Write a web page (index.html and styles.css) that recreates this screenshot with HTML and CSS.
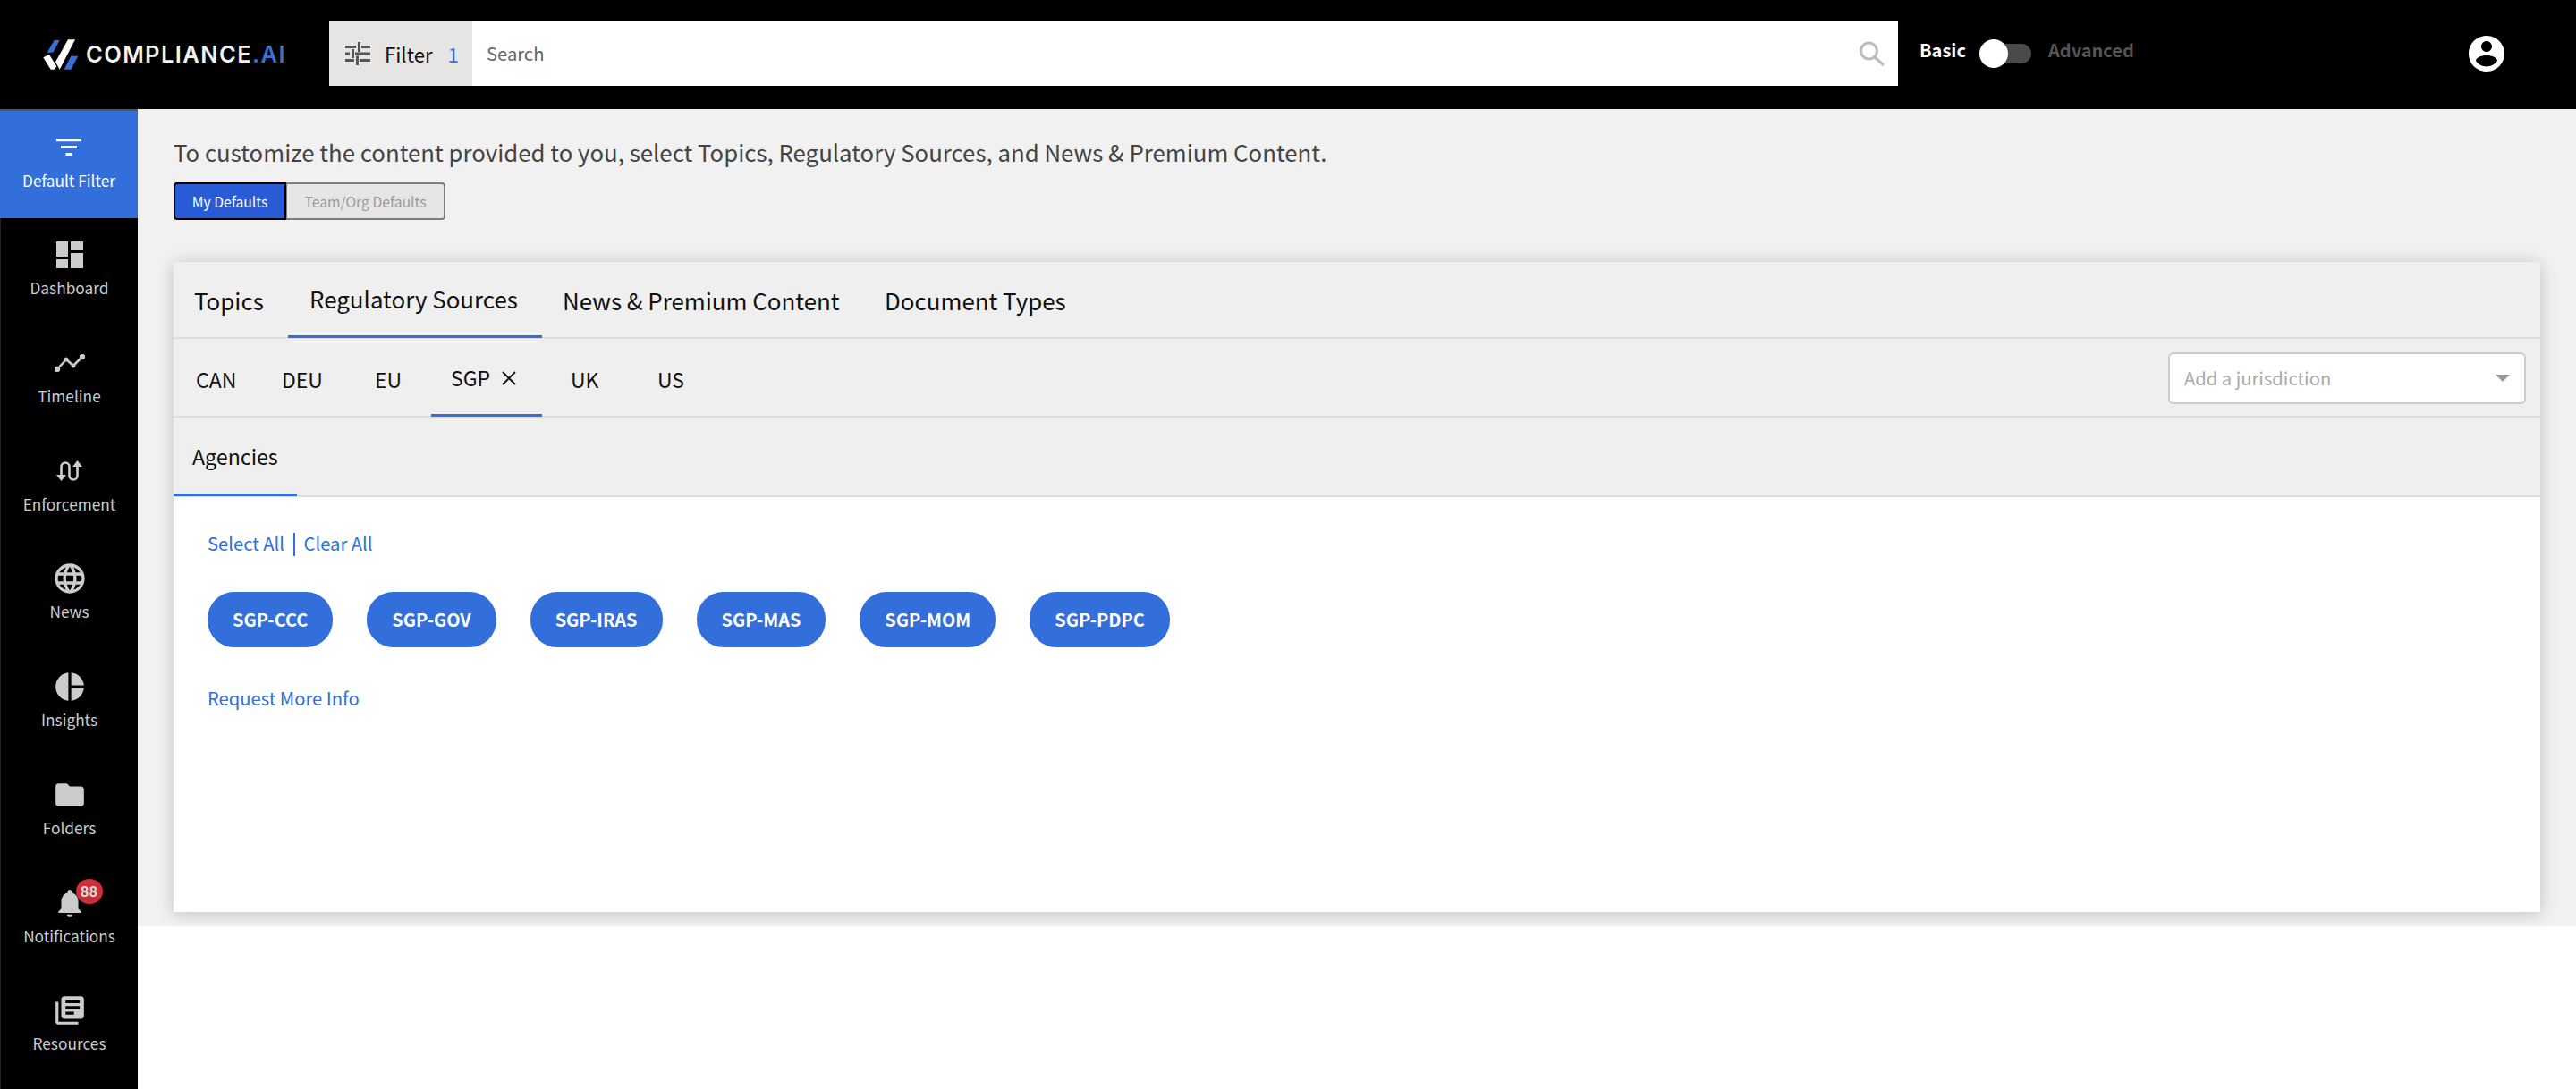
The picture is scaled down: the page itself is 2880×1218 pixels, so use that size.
FILE: index.html
```html
<!DOCTYPE html>
<html lang="en">
<head>
<meta charset="utf-8">
<title>Compliance.ai</title>
<link rel="stylesheet" href="styles.css">
</head>
<body>
<header class="topbar">
  <div class="logo">
    <svg class="logo-mark" viewBox="0 0 40 34" width="40" height="34">
      <polygon points="12.700,1 18.700,1 11.300,14.700 4.700,14.700" fill="#3a6fd8"/>
      <polygon points="0.300,20.300 7,17 15.300,30.300 12.700,33.700 8.700,33.700" fill="#fff"/>
      <polygon points="28,0.300 36,0.300 18.700,33.700 14,25.300" fill="#fff"/>
      <polygon points="31.300,18.700 39.300,18.700 31.300,33.700 23.700,33.700" fill="#3a6fd8"/>
    </svg>
    <span class="logo-text">COMPLIANCE<span class="logo-ai">.AI</span></span>
  </div>
  <div class="searchbar">
    <div class="filter-btn">
      <svg class="tune" viewBox="0 0 28 26" width="28" height="26" fill="#555">
        <rect x="0" y="4" width="12" height="3"/><rect x="18" y="4" width="10" height="3"/><rect x="14" y="0" width="3" height="11"/>
        <rect x="0" y="11.500" width="5" height="3"/><rect x="11" y="11.500" width="17" height="3"/><rect x="7" y="8" width="3" height="10"/>
        <rect x="0" y="19" width="10" height="3"/><rect x="16" y="19" width="12" height="3"/><rect x="12" y="15.500" width="3" height="10.500"/>
      </svg>
      <span class="filter-label">Filter</span>
      <span class="filter-count">1</span>
    </div>
    <div class="search-input">
      <span class="placeholder">Search</span>
      <svg viewBox="0 0 30 28" width="30" height="28" fill="none" stroke="#bdbdbd" stroke-width="3.200">
        <circle cx="11.500" cy="11" r="9"/><path d="M18 18 L28 27"/>
      </svg>
    </div>
  </div>
  <div class="mode">
    <span class="mode-basic">Basic</span>
    <span class="switch"><span class="thumb"></span></span>
    <span class="mode-adv">Advanced</span>
  </div>
  <svg class="avatar" viewBox="0 0 24 24" width="48" height="48" fill="#fff">
    <path d="M12 2C6.480 2 2 6.480 2 12s4.480 10 10 10 10-4.480 10-10S17.520 2 12 2zm0 3c1.660 0 3 1.340 3 3s-1.340 3-3 3-3-1.340-3-3 1.340-3 3-3zm0 14.200c-2.500 0-4.710-1.280-6-3.220.030-1.990 4-3.080 6-3.080 1.990 0 5.970 1.090 6 3.080-1.290 1.940-3.500 3.220-6 3.220z"/>
  </svg>
</header>

<div class="shell">
  <nav class="sidebar">
    <div class="nav-item active">
      <span class="nav-icon"><svg viewBox="0 0 28 20" width="28" height="20" fill="#fff"><rect y="0" width="28" height="3.200"/><rect x="5" y="8" width="18" height="3"/><rect x="10.500" y="16" width="7" height="3.200"/></svg></span>
      <span class="nav-label">Default Filter</span>
    </div>
    <div class="nav-item">
      <span class="nav-icon"><svg viewBox="0 0 30 30" width="30" height="30" fill="#ccc"><rect width="13" height="17"/><rect x="16" width="14" height="10"/><rect y="20" width="13" height="10"/><rect x="16" y="13" width="14" height="17"/></svg></span>
      <span class="nav-label">Dashboard</span>
    </div>
    <div class="nav-item">
      <span class="nav-icon"><svg viewBox="0 0 34 20" width="34" height="20" fill="#ccc" stroke="#ccc"><path d="M3 17 L13 6 L21 13 L31 3" fill="none" stroke-width="2.600"/><circle cx="3" cy="17" r="2.800"/><circle cx="13" cy="6" r="2"/><circle cx="21" cy="13" r="2"/><circle cx="31" cy="3" r="2.800"/></svg></span>
      <span class="nav-label">Timeline</span>
    </div>
    <div class="nav-item">
      <span class="nav-icon"><svg viewBox="0 0 30 24" width="30" height="24" fill="none" stroke="#ccc" stroke-width="2.600"><path d="M5.500 18 V7 A4.500 4.500 0 0 1 14.500 7 V17 A4.500 4.500 0 0 0 23.500 17 V4"/><path d="M0 16 H11 L5.500 23 Z" fill="#ccc" stroke="none"/><path d="M18 7 H29 L23.500 0 Z" fill="#ccc" stroke="none"/></svg></span>
      <span class="nav-label">Enforcement</span>
    </div>
    <div class="nav-item">
      <span class="nav-icon"><svg viewBox="0 0 24 24" width="40" height="40" fill="#ccc"><path d="M11.990 2C6.470 2 2 6.480 2 12s4.470 10 9.990 10C17.520 22 22 17.520 22 12S17.520 2 11.990 2zm6.930 6h-2.950c-.32-1.250-.78-2.450-1.380-3.560 1.840.63 3.370 1.910 4.330 3.560zM12 4.040c.83 1.200 1.480 2.530 1.910 3.960h-3.820c.43-1.430 1.080-2.760 1.910-3.960zM4.260 14C4.100 13.360 4 12.690 4 12s.1-1.360.26-2h3.380c-.08.660-.14 1.320-.14 2s.06 1.340.14 2H4.260zm.82 2h2.950c.32 1.250.78 2.450 1.380 3.560-1.840-.63-3.370-1.900-4.330-3.560zm2.950-8H5.080c.96-1.660 2.490-2.930 4.330-3.560C8.810 5.550 8.350 6.750 8.030 8zM12 19.960c-.83-1.200-1.480-2.530-1.910-3.960h3.820c-.43 1.430-1.080 2.760-1.910 3.960zM14.340 14H9.660c-.09-.66-.16-1.320-.16-2s.07-1.350.16-2h4.680c.09.650.16 1.320.16 2s-.07 1.340-.16 2zm.25 5.560c.6-1.110 1.060-2.310 1.380-3.560h2.950c-.96 1.650-2.490 2.930-4.330 3.560zM16.360 14c.08-.66.14-1.320.14-2s-.06-1.340-.14-2h3.380c.16.640.26 1.310.26 2s-.1 1.360-.26 2h-3.380z"/></svg></span>
      <span class="nav-label">News</span>
    </div>
    <div class="nav-item">
      <span class="nav-icon"><svg viewBox="0 0 24 24" width="38" height="38" fill="#ccc"><path d="M11 2v20c-5.070-.5-9-4.790-9-10s3.930-9.500 9-10zm2.030 0v8.990H22c-.47-4.740-4.240-8.520-8.970-8.990zm0 11.010V22c4.740-.47 8.500-4.250 8.970-8.990h-8.970z"/></svg></span>
      <span class="nav-label">Insights</span>
    </div>
    <div class="nav-item">
      <span class="nav-icon"><svg viewBox="0 0 24 24" width="38" height="38" fill="#ccc"><path d="M10 4H4c-1.100 0-1.990.9-1.990 2L2 18c0 1.100.9 2 2 2h16c1.100 0 2-.9 2-2V8c0-1.100-.9-2-2-2h-8l-2-2z"/></svg></span>
      <span class="nav-label">Folders</span>
    </div>
    <div class="nav-item">
      <span class="nav-icon"><svg viewBox="0 0 24 24" width="38" height="38" fill="#ccc"><path d="M12 22c1.100 0 2-.9 2-2h-4c0 1.100.9 2 2 2zm6-6v-5c0-3.070-1.630-5.640-4.500-6.320V4c0-.83-.67-1.500-1.500-1.500s-1.500.67-1.500 1.500v.68C7.640 5.360 6 7.920 6 11v5l-2 2v1h16v-1l-2-2z"/></svg><span class="badge">88</span></span>
      <span class="nav-label">Notifications</span>
    </div>
    <div class="nav-item">
      <span class="nav-icon"><svg viewBox="0 0 24 24" width="38" height="38" fill="#ccc"><path d="M4 6H2v14c0 1.100.9 2 2 2h14v-2H4V6zm16-4H8c-1.100 0-2 .9-2 2v12c0 1.100.9 2 2 2h12c1.100 0 2-.9 2-2V4c0-1.100-.9-2-2-2zm-1 9H9V9h10v2zm-4 4H9v-2h6v2zm4-8H9V5h10v2z"/></svg></span>
      <span class="nav-label">Resources</span>
    </div>
  </nav>

  <main class="main">
    <section class="panel">
      <p class="intro">To customize the content provided to you, select Topics, Regulatory Sources, and News &amp; Premium Content.</p>
      <div class="defaults">
        <span class="def def-on">My Defaults</span>
        <span class="def def-off">Team/Org Defaults</span>
      </div>
      <div class="card">
        <div class="tabs-row">
          <span class="tab tab-topics">Topics</span>
          <span class="tab tab-active">Regulatory Sources</span>
          <span class="tab tab-news">News &amp; Premium Content</span>
          <span class="tab tab-docs">Document Types</span>
        </div>
        <div class="jur-row">
          <span class="jur jur-can">CAN</span>
          <span class="jur jur-deu">DEU</span>
          <span class="jur jur-eu">EU</span>
          <span class="jur jur-active">SGP<svg class="close" viewBox="0 0 18 18" width="18" height="18" stroke="#111" stroke-width="1.800" fill="none"><path d="M2 2 L16 16 M16 2 L2 16"/></svg></span>
          <span class="jur jur-uk">UK</span>
          <span class="jur jur-us">US</span>
          <div class="jur-select">
            <span>Add a jurisdiction</span>
            <span class="caret"></span>
          </div>
        </div>
        <div class="agency-row"><span class="agency-tab">Agencies</span></div>
        <div class="card-body">
          <div class="links"><a>Select All</a><span class="sep"></span><a>Clear All</a></div>
          <div class="pills">
            <span class="pill">SGP-CCC</span>
            <span class="pill">SGP-GOV</span>
            <span class="pill">SGP-IRAS</span>
            <span class="pill">SGP-MAS</span>
            <span class="pill">SGP-MOM</span>
            <span class="pill">SGP-PDPC</span>
          </div>
          <a class="more">Request More Info</a>
        </div>
      </div>
    </section>
  </main>
</div>
</body>
</html>
```

FILE: styles.css
```css
* { box-sizing: border-box; }
html, body { margin: 0; padding: 0; height: 100%; }
body {
  background: #fff;
  font-family: "Noto Sans CJK SC", "Noto Sans", sans-serif;
  overflow: hidden;
}
.topbar {
  height: 122px;
  background: #000;
  display: flex;
  align-items: flex-start;
  position: relative;
}
.logo { display: flex; align-items: center; margin: 44px 0 0 48px; width: 320px; height: 34px; gap: 8px; }
.logo-text { font-family: "Inter", sans-serif; font-weight: 600; font-size: 25.5px; letter-spacing: 1.4px; color: #f2f2f2; line-height: 34px; white-space: nowrap; }
.logo-ai { color: #3a6fd8; }
.searchbar { display: flex; margin-top: 24px; height: 72px; width: 1754px; background: #fff; }
.filter-btn { width: 160px; background: #e6e5e3; display: flex; align-items: center; padding-left: 18px; }
.tune { flex: none; }
.filter-label { margin-left: 16px; font-size: 22.2px; line-height: 30px; color: #111; }
.filter-count { margin-left: 17px; font-size: 22.2px; line-height: 30px; color: #336fdb; }
.search-input { flex: 1; display: flex; align-items: center; justify-content: space-between; padding: 0 14px 0 16px; }
.placeholder { font-size: 20.2px; line-height: 28px; color: #666; }
.mode { display: flex; align-items: center; margin: 44px 0 0 24px; height: 32px; }
.mode-basic { font-size: 20px; font-weight: 700; line-height: 26px; color: #fff; margin-top: -8px; }
.switch { position: relative; width: 58px; height: 22px; background: #4a4a4a; border-radius: 11px; margin: 0 19px 0 15px; }
.thumb { position: absolute; left: 0; top: -5px; width: 32px; height: 32px; background: #fff; border-radius: 50%; }
.mode-adv { font-size: 20px; font-weight: 700; line-height: 26px; color: #555; margin-top: -8px; }
.avatar { position: absolute; left: 2756px; top: 36px; }

.shell { display: flex; height: 1096px; }
.sidebar { width: 154px; flex: none; background: #000; border-left: 1px solid #222; display: flex; flex-direction: column; }
.nav-item { height: 120.75px; padding-top: 23px; display: flex; flex-direction: column; align-items: center; flex: none; }
.nav-item.active { height: 122px; padding-top: 23px; background: #336fdb; border-top: 2px solid #555; margin-left: -1px; }
.nav-icon { position: relative; height: 36px; display: flex; align-items: center; justify-content: center; }
.nav-label { margin-top: 6px; font-size: 17.3px; line-height: 26px; color: #ccc; white-space: nowrap; }
.active .nav-label { color: #fff; }
.badge { position: absolute; left: 26px; top: -9px; width: 30px; height: 28px; border-radius: 50%; background: #c9303a; color: #ddd; font-size: 16.5px; font-weight: 700; line-height: 27px; text-align: center; }

.main { flex: 1; min-width: 0; }
.panel { height: 914px; background: #f1f1f1; padding: 26px 40px 0; }
.intro { margin: 0; font-size: 25.8px; line-height: 44px; color: #444; white-space: nowrap; }
.defaults { display: flex; margin-top: 12px; height: 42px; }
.def { display: flex; align-items: center; justify-content: center; padding-top: 1px; font-size: 15.7px; line-height: 24px; }
.def-on { width: 126px; background: #2a5bd7; color: #fff; border: 2px solid #000; border-radius: 4px 0 0 4px; }
.def-off { width: 178px; background: #e6e6e6; color: #999; border: 2px solid #7d7d7d; border-left-width: 1px; border-radius: 0 4px 4px 0; }

.card { margin-top: 47px; height: 727px; background: #fff; box-shadow: 0 2px 18px rgba(0, 0, 0, .2); display: flex; flex-direction: column; }
.tabs-row { height: 86px; flex: none; background: #efefef; border-bottom: 2px solid #ddd; display: flex; }
.tab { font-size: 25.9px; line-height: 36px; color: #111; padding-top: 25px; white-space: nowrap; }
.tab-topics { padding-left: 23px; width: 128px; }
.tab-active { width: 284px; padding-left: 24px; padding-top: 23px; border-bottom: 3px solid #336fdb; height: 85px; }
.tab-news { padding-left: 23px; width: 360px; }
.tab-docs { padding-left: 23px; }
.jur-row { height: 88px; flex: none; background: #efefef; border-bottom: 2px solid #ddd; display: flex; position: relative; }
.jur { font-size: 23px; line-height: 32px; color: #111; padding-top: 29px; white-space: nowrap; }
.jur-can { width: 121px; padding-left: 25px; }
.jur-deu { width: 104px; }
.jur-eu { width: 63px; }
.jur-active { width: 124px; padding-left: 22px; padding-top: 27px; height: 87px; border-bottom: 3px solid #336fdb; }
.close { margin-left: 12px; }
.jur-uk { width: 97px; margin-left: 32px; }
.jur-us { width: 60px; }
.jur-select { margin: 15px 16px 0 auto; width: 400px; height: 58px; background: #fff; border: 2px solid #ccc; border-radius: 6px; display: flex; align-items: center; justify-content: space-between; padding: 0 16px; font-size: 20.2px; line-height: 30px; color: #aaa; }
.caret { width: 0; height: 0; border-left: 8px solid transparent; border-right: 8px solid transparent; border-top: 8px solid #999; }
.agency-row { height: 89px; flex: none; background: #efefef; border-bottom: 2px solid #ddd; }
.agency-tab { display: block; width: 138px; height: 88px; padding: 27px 0 0 21px; font-size: 23.2px; line-height: 32px; color: #111; border-bottom: 3px solid #336fdb; }
.card-body { flex: 1; padding: 36px 0 0 38px; }
.links { display: flex; align-items: center; height: 32px; font-size: 20.2px; line-height: 32px; color: #2f6fde; }
.sep { width: 1.5px; height: 26px; background: #2f6fde; margin: 2px 10px 0 10px; }
.pills { display: flex; gap: 38px; margin-top: 38px; }
.pill { height: 62px; padding: 0 28px; border-radius: 30px; background: #336fdb; color: #fff; font-size: 19.9px; font-weight: 700; line-height: 62px; white-space: nowrap; }
.more { display: block; margin-top: 41px; font-size: 20.2px; line-height: 32px; color: #2f6fde; }
```
